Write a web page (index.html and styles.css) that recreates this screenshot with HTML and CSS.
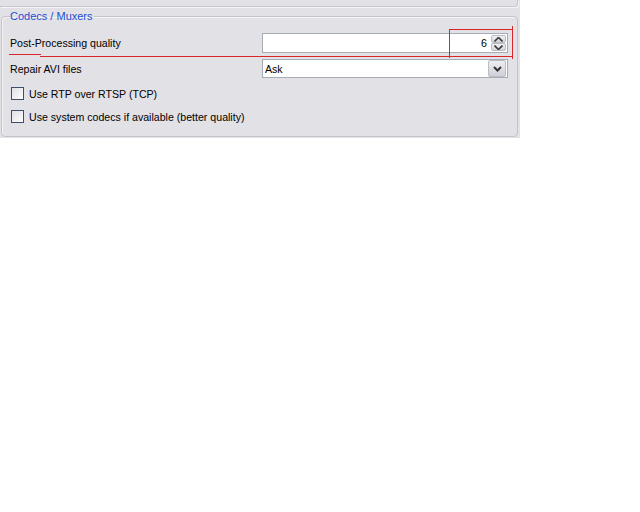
FILE: index.html
```html
<!DOCTYPE html>
<html>
<head>
<meta charset="utf-8">
<link rel="stylesheet" href="styles.css">
</head>
<body>
<div class="panel">
  <div class="topbox"></div>
  <fieldset class="group">
    <legend class="title">Codecs / Muxers</legend>
    <div class="row">
      <span class="label">Post-Processing quality</span>
      <div class="field spin">
        <span class="value">6</span>
        <span class="spinbtns">
          <span class="sbtn"><svg width="9" height="5" viewBox="0 0 9 5"><path d="M0.5 4.5 L4.5 0.5 L8.5 4.5" fill="none" stroke="#3a3a3a" stroke-width="1.6"/></svg></span>
          <span class="sbtn"><svg width="9" height="5" viewBox="0 0 9 5"><path d="M0.5 0.5 L4.5 4.5 L8.5 0.5" fill="none" stroke="#3a3a3a" stroke-width="1.6"/></svg></span>
        </span>
      </div>
    </div>
    <div class="row row2">
      <span class="label">Repair AVI files</span>
      <div class="field combo">
        <span class="value left">Ask</span>
        <span class="dropbtn"><svg width="9" height="6" viewBox="0 0 9 6"><path d="M1 1 L4.5 4.5 L8 1" fill="none" stroke="#333" stroke-width="2"/></svg></span>
      </div>
    </div>
    <label class="check"><span class="box"></span><span>Use RTP over RTSP (TCP)</span></label>
    <label class="check"><span class="box"></span><span>Use system codecs if available (better quality)</span></label>
  </fieldset>
  <div class="mark mark-a"></div>
  <div class="mark mark-b"></div>
  <div class="mark mark-top"></div>
  <div class="mark mark-left"></div>
  <div class="mark mark-right"></div>
</div>
</body>
</html>
```
FILE: styles.css
```css
html, body {
  margin: 0;
  padding: 0;
  background: #ffffff;
}
body {
  font-family: Tahoma, "Liberation Sans", Arial, sans-serif;
  font-size: 10.6px;
  color: #000;
}
.panel {
  position: relative;
  width: 520px;
  height: 138px;
  background: #e2e1e6;
  display: flex;
  flex-direction: column;
}
.topbox {
  height: 6px;
  margin: 0 2px 0 0;
  border: 1px solid #c6c6cb;
  border-top: none;
  border-left: none;
  border-radius: 0 0 4px 0;
  box-shadow: 1px 1px 0 #f6f6f8;
}
.group {
  margin: 3px 2px 1px 1px;
  padding: 0 0 0 8px;
  border: 1px solid #c3c3c8;
  border-radius: 4px;
  flex: 1;
  box-shadow: 1px 1px 0 #f4f4f6 inset;
  display: flex;
  flex-direction: column;
  min-width: 0;
  min-height: 0;
}
.title {
  color: #1b4fd0;
  padding: 0 1px 0 0;
  margin-left: 0;
  font-size: 11px;
  line-height: 13px;
}
.row {
  display: flex;
  align-items: center;
  height: 20px;
  margin-top: 10px;
}
.row2 {
  margin-top: 6px;
  height: 19px;
}
.label {
  width: 252px;
  flex: none;
}
.field {
  width: 246px;
  height: 100%;
  box-sizing: border-box;
  background: #fff;
  border: 1px solid #a5acb5;
  display: flex;
  align-items: center;
}
.value {
  flex: 1;
  text-align: right;
  padding-right: 4px;
}
.value.left {
  text-align: left;
  padding-left: 2px;
}
.spinbtns {
  width: 15px;
  height: 16px;
  margin-right: 1px;
  display: flex;
  flex-direction: column;
}
.sbtn {
  flex: 1;
  border: 1px solid #b9bdc6;
  border-radius: 2px;
  background: linear-gradient(#f0f0f3, #d6d7dd);
  display: flex;
  align-items: center;
  justify-content: center;
}
.dropbtn {
  width: 16px;
  height: 15px;
  margin-right: 1px;
  border: 1px solid #b9bdc6;
  border-radius: 2px;
  background: linear-gradient(#eeeef2, #cfd0d8);
  display: flex;
  align-items: center;
  justify-content: center;
}
.check {
  display: flex;
  align-items: center;
  gap: 5px;
  margin-left: 1px;
  height: 13px;
  margin-top: 9px;
}
.check + .check {
  margin-top: 10px;
}
.box {
  width: 11px;
  height: 11px;
  border: 1px solid #3f4f6a;
  background: linear-gradient(135deg, #e0e0e6, #fdfdfd);
  flex: none;
}
.mark {
  position: absolute;
  background: #d9262b;
}
.mark-a {
  left: 9px;
  top: 54px;
  width: 32px;
  height: 1px;
}
.mark-b {
  left: 40px;
  top: 56px;
  width: 473px;
  height: 1px;
}
.mark-top {
  left: 449px;
  top: 29px;
  width: 63px;
  height: 1px;
}
.mark-left {
  left: 449px;
  top: 29px;
  width: 1px;
  height: 29px;
}
.mark-right {
  left: 512px;
  top: 26px;
  width: 1px;
  height: 33px;
}
```
